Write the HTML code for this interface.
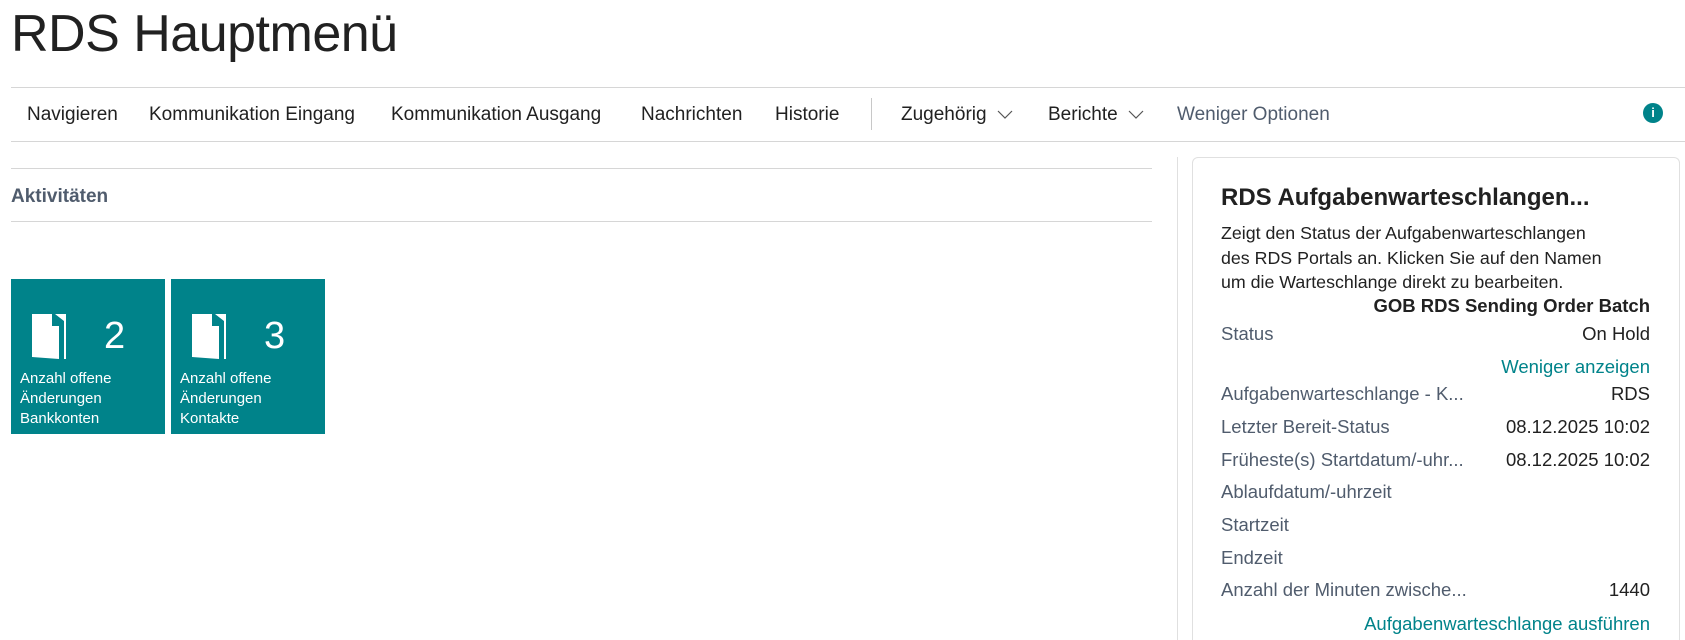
<!DOCTYPE html>
<html><head><meta charset="utf-8"><style>
*{margin:0;padding:0;box-sizing:border-box}
html,body{width:1685px;height:640px;overflow:hidden}
body{background:#fff;font-family:"Liberation Sans",sans-serif;color:#212121;position:relative}
.a{position:absolute;white-space:nowrap}
.title{left:11px;top:4px;font-size:52px;font-weight:300;color:#212121;letter-spacing:-0.5px}
.hl{position:absolute;height:1px;background:#d6d6d6}
.nav{font-size:19px;top:104px;color:#212121}
.tile{position:absolute;top:279px;width:154px;height:155px;background:#00838a;color:#fff}
.tile .n{position:absolute;left:93px;top:36px;font-size:38px;font-weight:300}
.tile .l{position:absolute;left:9px;top:90px;font-size:15px;line-height:20px}
.tile svg{position:absolute;left:20px;top:34px}
.card{position:absolute;left:1192px;top:157px;width:488px;height:483px;border:1px solid #e0e0e0;border-bottom:none;border-radius:6px 6px 0 0}
.lab{left:1221px;font-size:18.5px;color:#505c6d}
.val{right:35px;font-size:18.5px;color:#212121;text-align:right}
.lnk{right:35px;font-size:18.5px;color:#00838a}
</style></head><body>
<div class="a title">RDS Hauptmenü</div>
<div class="hl" style="left:11px;top:87px;width:1674px"></div>
<div class="hl" style="left:11px;top:141px;width:1674px"></div>
<div class="a nav" style="left:27px">Navigieren</div>
<div class="a nav" style="left:149px">Kommunikation Eingang</div>
<div class="a nav" style="left:391px">Kommunikation Ausgang</div>
<div class="a nav" style="left:641px">Nachrichten</div>
<div class="a nav" style="left:775px">Historie</div>
<div style="position:absolute;left:871px;top:98px;width:1px;height:32px;background:#c8c8c8"></div>
<div class="a nav" style="left:901px">Zugehörig <svg width="18" height="12" viewBox="0 0 18 12" style="margin-left:4px"><path d="M2 3l7 7 7-7" fill="none" stroke="#555" stroke-width="1.2"/></svg></div>
<div class="a nav" style="left:1048px">Berichte <svg width="18" height="12" viewBox="0 0 18 12" style="margin-left:4px"><path d="M2 3l7 7 7-7" fill="none" stroke="#555" stroke-width="1.2"/></svg></div>
<div class="a nav" style="left:1177px;color:#505c6d">Weniger Optionen</div>
<div style="position:absolute;left:1643px;top:103px;width:20px;height:20px;border-radius:50%;background:#00838a;color:#fff;font-size:13px;font-weight:bold;text-align:center;line-height:20px">i</div>

<div class="hl" style="left:11px;top:168px;width:1141px"></div>
<div class="a" style="left:11px;top:186px;font-size:19px;font-weight:bold;color:#505c6d">Aktivitäten</div>
<div class="hl" style="left:11px;top:221px;width:1141px"></div>
<div style="position:absolute;left:1177px;top:157px;width:1px;height:483px;background:#e0e0e0"></div>

<div class="tile" style="left:11px">
<svg width="36" height="48" viewBox="0 0 36 48"><path d="M1 1h20v12h7v33L1 44z" fill="#fff"/><path d="M24 1h11v45h-2V8z" fill="#fff"/></svg>
<div class="n">2</div>
<div class="l">Anzahl offene<br>Änderungen<br>Bankkonten</div></div>
<div class="tile" style="left:171px">
<svg width="36" height="48" viewBox="0 0 36 48"><path d="M1 1h20v12h7v33L1 44z" fill="#fff"/><path d="M24 1h11v45h-2V8z" fill="#fff"/></svg>
<div class="n">3</div>
<div class="l">Anzahl offene<br>Änderungen<br>Kontakte</div></div>

<div class="card"></div>
<div class="a" style="left:1221px;top:184px;font-size:24px;font-weight:bold;color:#212121">RDS Aufgabenwarteschlangen...</div>
<div class="a" style="left:1221px;top:221px;font-size:17.8px;line-height:24.5px;color:#212121">Zeigt den Status der Aufgabenwarteschlangen<br>des RDS Portals an. Klicken Sie auf den Namen<br>um die Warteschlange direkt zu bearbeiten.</div>
<div class="a val" style="top:295px;font-weight:bold">GOB RDS Sending Order Batch</div>
<div class="a lab" style="top:323px">Status</div><div class="a val" style="top:323px">On Hold</div>
<div class="a lnk" style="top:356px">Weniger anzeigen</div>
<div class="a lab" style="top:383px">Aufgabenwarteschlange - K...</div><div class="a val" style="top:383px">RDS</div>
<div class="a lab" style="top:416px">Letzter Bereit-Status</div><div class="a val" style="top:416px">08.12.2025 10:02</div>
<div class="a lab" style="top:449px">Früheste(s) Startdatum/-uhr...</div><div class="a val" style="top:449px">08.12.2025 10:02</div>
<div class="a lab" style="top:481px">Ablaufdatum/-uhrzeit</div>
<div class="a lab" style="top:514px">Startzeit</div>
<div class="a lab" style="top:547px">Endzeit</div>
<div class="a lab" style="top:579px">Anzahl der Minuten zwische...</div><div class="a val" style="top:579px">1440</div>
<div class="a lnk" style="top:613px">Aufgabenwarteschlange ausführen</div>
</body></html>
